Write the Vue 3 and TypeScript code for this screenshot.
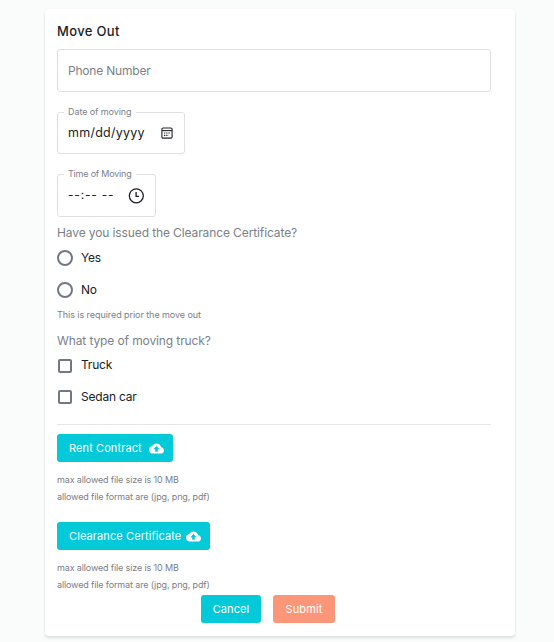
<script setup lang="ts">
import { ref } from 'vue'

interface Upload {
  label: string
  kind: string
}

const issued = ref<string>('')
const trucks = ref<string[]>([])
const issuedOptions: string[] = ['Yes', 'No']
const truckOptions: string[] = ['Truck', 'Sedan car']
const uploads: Upload[] = [
  { label: 'Rent Contract', kind: 'rent' },
  { label: 'Clearance Certificate', kind: 'clearance' },
]
</script>

<template>
  <main class="page">
    <form class="card" @submit.prevent>
      <h1 class="title">Move Out</h1>
      <div class="field phone"><span class="phone-text">Phone Number</span></div>

      <div class="field date">
        <span class="legend">Date of moving</span>
        <span class="value date-value">mm/dd/yyyy</span>
        <svg class="calendar" viewBox="0 0 12 12" fill="none" stroke="#202124">
          <rect x="0.9" y="1" width="10.2" height="10.1" rx="1.2" stroke-width="1.1" />
          <path d="M1 3.6H11" stroke-width="1.1" />
          <path d="M3 6H9.4M3 8.3H7.6" stroke-width="1.2" stroke-dasharray="1.3 .9" />
        </svg>
      </div>

      <div class="field time">
        <span class="legend time-legend">Time of Moving</span>
        <span class="value time-value">--:-- --</span>
        <svg class="clock" viewBox="0 0 16 16" fill="none" stroke="#202124" stroke-width="1.3">
          <circle cx="8.3" cy="7.8" r="7" />
          <path d="M8.1 3.9V8.3H11" />
        </svg>
      </div>

      <p class="question issued-q">Have you issued the Clearance Certificate?</p>
      <label v-for="o in issuedOptions" :key="o" class="option">
        <input v-model="issued" type="radio" name="issued" :value="o" class="control radio" />
        <span class="option-text">{{ o }}</span>
      </label>
      <p class="helper">This is required prior the move out</p>

      <p class="question truck-q">What type of moving truck?</p>
      <label v-for="o in truckOptions" :key="o" class="option truck-option">
        <input v-model="trucks" type="checkbox" :value="o" class="control check" />
        <span class="option-text">{{ o }}</span>
      </label>

      <hr class="divider" />

      <section v-for="u in uploads" :key="u.kind" class="upload">
        <button type="button" class="btn" :class="u.kind">
          <span>{{ u.label }}</span>
          <svg class="cloud" viewBox="0 0 24 24" fill="#fff">
            <path d="M19.35 10.04C18.67 6.59 15.64 4 12 4 9.11 4 6.6 5.64 5.35 8.04 2.34 8.36 0 10.91 0 14c0 3.31 2.69 6 6 6h13c2.76 0 5-2.24 5-5 0-2.64-2.05-4.78-4.65-4.96zM14 13v4h-4v-4H7l5-5 5 5h-3z" />
          </svg>
        </button>
        <p class="note size-note">max allowed file size is 10 MB</p>
        <p class="note format-note">allowed file format are (jpg, png, pdf)</p>
      </section>

      <div class="actions">
        <button type="button" class="btn cancel">Cancel</button>
        <button type="submit" class="btn submit">Submit</button>
      </div>
    </form>
  </main>
</template>

<style>
body {
  background: #fafcfb;
}
</style>

<style scoped>
* {
  box-sizing: border-box;
}
.page {
  height: 642px;
  padding: 9px 39px 0 45px;
  overflow: hidden;
  font-family: Inter, "Liberation Sans", sans-serif;
  font-size: 12px;
  color: #202124;
}
.card {
  height: 627px;
  padding: 12px 24px 0 12px;
  background: #fff;
  border-radius: 4px;
  box-shadow: 0 2px 3px rgba(0, 0, 0, 0.12);
}
.title {
  margin: 0 0 8px;
  font-size: 13px;
  line-height: 20px;
  font-weight: 500;
  letter-spacing: 0.35px;
}
.field {
  position: relative;
  display: flex;
  align-items: center;
  padding: 0 11px 0 10px;
  border: 1px solid #dedfe0;
  border-radius: 3px;
}
.phone {
  height: 43px;
  padding-bottom: 1px;
  color: #7b8088;
  letter-spacing: -0.2px;
}
.date {
  width: 128px;
  height: 42px;
  margin-top: 20px;
}
.time {
  width: 99px;
  height: 43px;
  margin-top: 20px;
}
.legend {
  position: absolute;
  top: -7px;
  left: 6px;
  padding: 0 4px;
  background: #fff;
  color: #7b8088;
  font-size: 9px;
  line-height: 12px;
  letter-spacing: -0.08px;
  white-space: nowrap;
}
.time-legend {
  letter-spacing: -0.2px;
}
.value {
  flex: 1;
  padding-bottom: 2px;
  white-space: nowrap;
}
.date-value {
  font-size: 12.5px;
  letter-spacing: 0.25px;
}
.time-value {
  letter-spacing: 0.8px;
}
.calendar {
  width: 12px;
  height: 12px;
}
.clock {
  width: 16px;
  height: 16px;
}
.question {
  margin: 0;
  color: #7b8088;
  line-height: 18px;
  letter-spacing: -0.11px;
}
.issued-q {
  margin-top: 7px;
}
.option {
  display: flex;
  align-items: center;
  height: 32px;
  gap: 8px;
}
.truck-option {
  height: 31.5px;
}
.option-text {
  padding-bottom: 2px;
  letter-spacing: -0.22px;
}
.control {
  appearance: none;
  flex: none;
  margin: 0;
  border: 1.5px solid #717783;
}
.radio {
  width: 16px;
  height: 16px;
  border-width: 2px;
  border-radius: 50%;
}
.check {
  width: 14px;
  height: 14px;
  margin: 0 1px;
  border-width: 2px;
  border-radius: 2px;
}
.helper {
  margin: 2px 0 0;
  font-size: 9px;
  line-height: 14px;
  letter-spacing: -0.06px;
  color: #7b8088;
}
.truck-q {
  margin-top: 10px;
}
.divider {
  height: 1px;
  margin: 11px 0 9px;
  border: 0;
  background: #e5e6e7;
}
.upload {
  height: 88px;
}
.btn {
  display: flex;
  align-items: center;
  justify-content: space-between;
  height: 28px;
  padding: 0 9px 0 12px;
  border: 0;
  border-radius: 3px;
  background: #03c9d8;
  color: #fff;
  font: 400 11px Inter, "Liberation Sans", sans-serif;
  letter-spacing: 0.1px;
  white-space: nowrap;
}
.rent {
  width: 116px;
}
.clearance {
  width: 153px;
}
.cloud {
  width: 15px;
  height: 15px;
}
.note {
  margin: 0;
  color: #7b8088;
  font-size: 9px;
  line-height: 17px;
  letter-spacing: -0.14px;
}
.size-note {
  margin-top: 9px;
}
.actions {
  display: flex;
  gap: 12px;
  margin: -15px 0 0 144px;
}
.cancel,
.submit {
  justify-content: center;
  padding: 0;
}
.cancel {
  width: 60px;
}
.submit {
  width: 62px;
  background: #fc9679;
}
</style>
